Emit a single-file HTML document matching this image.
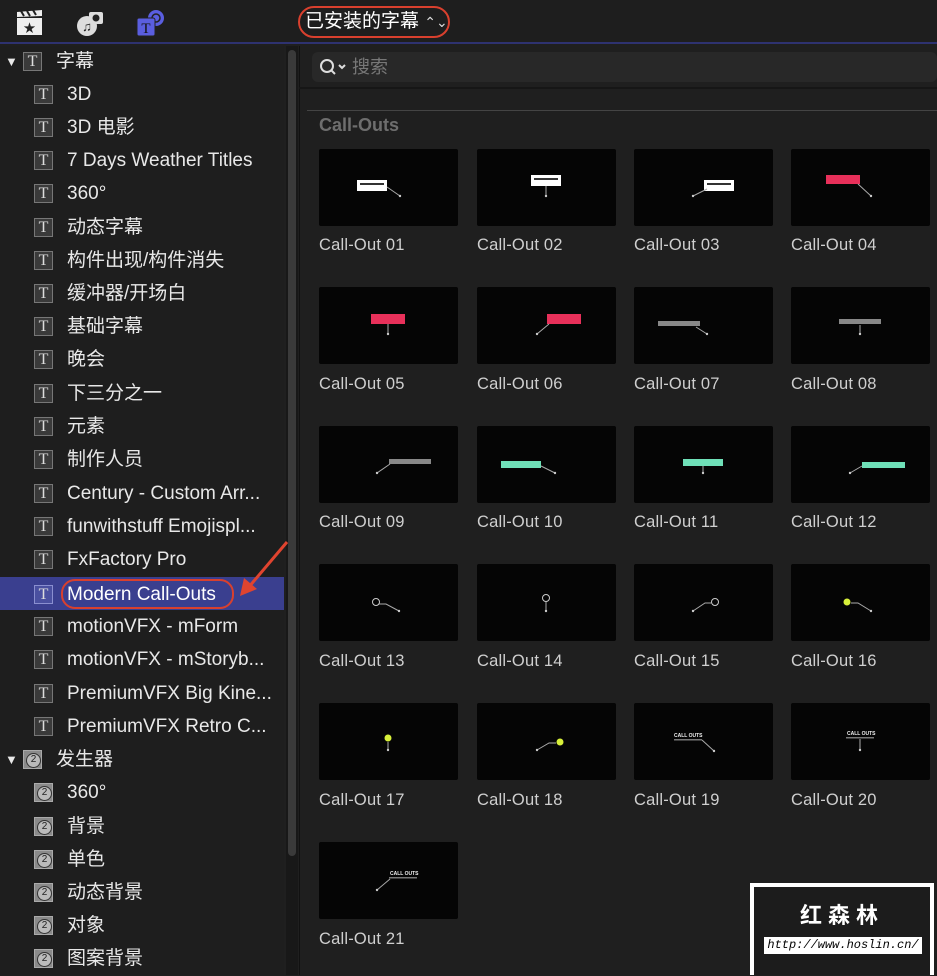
<!DOCTYPE html>
<html><head><meta charset="utf-8"><style>
*{margin:0;padding:0;box-sizing:border-box}
body{width:937px;height:975px;background:#1f1f1f;font-family:"Liberation Sans","Noto Sans CJK SC",sans-serif;color:#e6e6e6;position:relative;overflow:hidden}
.top{position:absolute;left:0;top:0;width:937px;height:44px;background:#1e1e1e;border-bottom:2px solid #2e3270}
.sel{position:absolute;left:298px;top:6px;width:152px;height:32px;border:2.5px solid #d9402e;border-radius:16px;font-size:19px;color:#fff;line-height:27px;padding-left:5px}
.side{position:absolute;left:0;top:46px;width:284px;height:929px;background:#1e1e1e}
.row{position:absolute;left:0;width:284px;height:33px;font-size:19px;line-height:35px;color:#e8e8e8;white-space:nowrap}
.ic{position:absolute;top:8px;width:19px;height:19px;background:#3a3a3a;border:1px solid #777;color:#ddd;font-family:"Liberation Serif",serif;font-size:16px;line-height:17px;text-align:center}
.ic2{position:absolute;top:8px;width:19px;height:19px;background:#8a8a8a;border:1px solid #aaa}
.ic2:after{content:"2";position:absolute;left:2px;top:2px;width:13px;height:13px;border-radius:50%;border:1px solid #333;background:#bbb;color:#222;font-size:10px;line-height:12px;text-align:center}
.track{position:absolute;left:286px;top:46px;width:12px;height:929px;background:#181818}
.thumbbar{position:absolute;left:288px;top:50px;width:8px;height:806px;background:#3a3a3a;border-radius:4px}
.main{position:absolute;left:299px;top:46px;width:638px;height:929px;background:#1f1f1f;border-left:1px solid #111}
.search{position:absolute;left:312px;top:52px;width:625px;height:30px;background:#282828;border-radius:6px;font-size:18px;color:#777;line-height:30px;padding-left:40px}
.hr1{position:absolute;left:299px;top:87px;width:638px;height:2px;background:#161616}
.hr2{position:absolute;left:307px;top:110px;width:630px;height:1px;background:#444}
.cat{position:absolute;left:319px;top:115px;font-size:18px;font-weight:bold;color:#6e6e6e}
.t{position:absolute;width:139px;height:77px;background:#050505;border-radius:2px}
.t svg{position:absolute;left:0;top:0}
.lab{position:absolute;font-size:16.5px;color:#cfcfcf;letter-spacing:.2px}
</style></head><body>
<div class="top">
<svg style="position:absolute;left:16px;top:10px" width="28" height="26" viewBox="0 0 28 26"><rect x="1" y="8" width="25" height="17" fill="#eee"/><path d="M1 2 L26 0 L26 6 L1 7Z" fill="#eee"/><path d="M5 1l3 5M11 1l3 5M17 0l3 5" stroke="#222" stroke-width="2"/><text x="13.5" y="22" font-size="12" text-anchor="middle" fill="#222">★</text></svg>
<svg style="position:absolute;left:76px;top:9px" width="28" height="28" viewBox="0 0 28 28"><circle cx="11" cy="17" r="10" fill="#ddd"/><rect x="13" y="3" width="14" height="12" rx="2" fill="#ddd"/><circle cx="20" cy="9" r="3.5" fill="#222"/><text x="11" y="22" font-size="13" text-anchor="middle" fill="#222">♫</text></svg>
<svg style="position:absolute;left:136px;top:9px" width="30" height="28" viewBox="0 0 30 28"><circle cx="20" cy="9" r="8" fill="#5a5ee0"/><circle cx="20" cy="9" r="4" fill="none" stroke="#222" stroke-width="1.5"/><rect x="1" y="9" width="18" height="18" rx="2" fill="#5a5ee0" stroke="#222"/><text x="10" y="24" font-size="15" font-family="Liberation Serif" text-anchor="middle" fill="#111">T</text></svg>
<div class="sel">已安装的字幕 <span style="font-size:14px;color:#ddd">⌃⌄</span></div>
</div>
<div class="side">
<div class="row" style="top:-2px"><span style="position:absolute;left:5px;font-size:13px">▼</span><div class="ic" style="left:23px">T</div><span style="position:absolute;left:56px">字幕</span></div>
<div class="row" style="top:31px"><div class="ic" style="left:34px">T</div><span style="position:absolute;left:67px">3D</span></div>
<div class="row" style="top:64px"><div class="ic" style="left:34px">T</div><span style="position:absolute;left:67px">3D 电影</span></div>
<div class="row" style="top:97px"><div class="ic" style="left:34px">T</div><span style="position:absolute;left:67px">7 Days Weather Titles</span></div>
<div class="row" style="top:130px"><div class="ic" style="left:34px">T</div><span style="position:absolute;left:67px">360°</span></div>
<div class="row" style="top:164px"><div class="ic" style="left:34px">T</div><span style="position:absolute;left:67px">动态字幕</span></div>
<div class="row" style="top:197px"><div class="ic" style="left:34px">T</div><span style="position:absolute;left:67px">构件出现/构件消失</span></div>
<div class="row" style="top:230px"><div class="ic" style="left:34px">T</div><span style="position:absolute;left:67px">缓冲器/开场白</span></div>
<div class="row" style="top:263px"><div class="ic" style="left:34px">T</div><span style="position:absolute;left:67px">基础字幕</span></div>
<div class="row" style="top:296px"><div class="ic" style="left:34px">T</div><span style="position:absolute;left:67px">晚会</span></div>
<div class="row" style="top:330px"><div class="ic" style="left:34px">T</div><span style="position:absolute;left:67px">下三分之一</span></div>
<div class="row" style="top:363px"><div class="ic" style="left:34px">T</div><span style="position:absolute;left:67px">元素</span></div>
<div class="row" style="top:396px"><div class="ic" style="left:34px">T</div><span style="position:absolute;left:67px">制作人员</span></div>
<div class="row" style="top:430px"><div class="ic" style="left:34px">T</div><span style="position:absolute;left:67px">Century - Custom Arr...</span></div>
<div class="row" style="top:463px"><div class="ic" style="left:34px">T</div><span style="position:absolute;left:67px">funwithstuff Emojispl...</span></div>
<div class="row" style="top:496px"><div class="ic" style="left:34px">T</div><span style="position:absolute;left:67px">FxFactory Pro</span></div>
<div class="row" style="top:531px;background:#3a3f8f"><div class="ic" style="left:34px;background:#4a50a0;border-color:#8a8fd0">T</div><span style="position:absolute;left:67px;color:#fff">Modern Call-Outs</span><div style="position:absolute;left:61px;top:2px;width:173px;height:30px;border:2.5px solid #d9402e;border-radius:14px"></div></div>
<div class="row" style="top:563px"><div class="ic" style="left:34px">T</div><span style="position:absolute;left:67px">motionVFX - mForm</span></div>
<div class="row" style="top:596px"><div class="ic" style="left:34px">T</div><span style="position:absolute;left:67px">motionVFX - mStoryb...</span></div>
<div class="row" style="top:630px"><div class="ic" style="left:34px">T</div><span style="position:absolute;left:67px">PremiumVFX Big Kine...</span></div>
<div class="row" style="top:663px"><div class="ic" style="left:34px">T</div><span style="position:absolute;left:67px">PremiumVFX Retro C...</span></div>
<div class="row" style="top:696px"><span style="position:absolute;left:5px;font-size:13px">▼</span><div class="ic2" style="left:23px"></div><span style="position:absolute;left:56px">发生器</span></div>
<div class="row" style="top:729px"><div class="ic2" style="left:34px"></div><span style="position:absolute;left:67px">360°</span></div>
<div class="row" style="top:763px"><div class="ic2" style="left:34px"></div><span style="position:absolute;left:67px">背景</span></div>
<div class="row" style="top:796px"><div class="ic2" style="left:34px"></div><span style="position:absolute;left:67px">单色</span></div>
<div class="row" style="top:829px"><div class="ic2" style="left:34px"></div><span style="position:absolute;left:67px">动态背景</span></div>
<div class="row" style="top:862px"><div class="ic2" style="left:34px"></div><span style="position:absolute;left:67px">对象</span></div>
<div class="row" style="top:895px"><div class="ic2" style="left:34px"></div><span style="position:absolute;left:67px">图案背景</span></div>
</div>
<div class="track"></div><div class="thumbbar"></div>
<svg style="position:absolute;left:230px;top:538px" width="62" height="62"><path d="M57 4 L18 50" stroke="#e0442f" stroke-width="3"/><path d="M10 58 L14 40 L27 51Z" fill="#e0442f"/></svg>
<div class="main"></div>
<div class="search"><svg style="position:absolute;left:7px;top:6px" width="28" height="18"><circle cx="8" cy="8" r="6" fill="none" stroke="#ddd" stroke-width="2"/><path d="M12 12l4 4M20 7l3 3 3-3" stroke="#ddd" stroke-width="2" fill="none"/></svg>搜索</div>
<div class="hr1"></div><div class="hr2"></div>
<div class="cat">Call-Outs</div>

<div class="t" style="left:319px;top:149px"><svg width="139" height="77"><rect x="38" y="31" width="30" height="11" fill="#fff"/><rect x="41" y="34" width="24" height="2" fill="#333"/><path d="M68 38L81 47" stroke="#aaa"/><circle cx="81" cy="47" r="1.2" fill="#ccc"/></svg></div>
<div class="t" style="left:477px;top:149px"><svg width="139" height="77"><rect x="54" y="26" width="30" height="11" fill="#fff"/><rect x="57" y="29" width="24" height="2" fill="#333"/><path d="M69 37V47" stroke="#aaa"/><circle cx="69" cy="47" r="1.2" fill="#ccc"/></svg></div>
<div class="t" style="left:634px;top:149px"><svg width="139" height="77"><rect x="70" y="31" width="30" height="11" fill="#fff"/><rect x="73" y="34" width="24" height="2" fill="#333"/><path d="M73 40L59 47" stroke="#aaa"/><circle cx="59" cy="47" r="1.2" fill="#ccc"/></svg></div>
<div class="t" style="left:791px;top:149px"><svg width="139" height="77"><rect x="35" y="26" width="34" height="9" fill="#e8305a"/><path d="M67 35L80 47" stroke="#aaa"/><circle cx="80" cy="47" r="1.2" fill="#ccc"/></svg></div>
<div class="lab" style="left:319px;top:236px">Call-Out 01</div><div class="lab" style="left:477px;top:236px">Call-Out 02</div><div class="lab" style="left:634px;top:236px">Call-Out 03</div><div class="lab" style="left:791px;top:236px">Call-Out 04</div>
<div class="t" style="left:319px;top:287px"><svg width="139" height="77"><rect x="52" y="27" width="34" height="10" fill="#e8305a"/><path d="M69 37V47" stroke="#aaa"/><circle cx="69" cy="47" r="1.2" fill="#ccc"/></svg></div>
<div class="t" style="left:477px;top:287px"><svg width="139" height="77"><rect x="70" y="27" width="34" height="10" fill="#e8305a"/><path d="M72 37L60 47" stroke="#aaa"/><circle cx="60" cy="47" r="1.2" fill="#ccc"/></svg></div>
<div class="t" style="left:634px;top:287px"><svg width="139" height="77"><rect x="24" y="34" width="42" height="5" fill="#888"/><path d="M62 40L73 47" stroke="#aaa"/><circle cx="73" cy="47" r="1.2" fill="#ccc"/></svg></div>
<div class="t" style="left:791px;top:287px"><svg width="139" height="77"><rect x="48" y="32" width="42" height="5" fill="#888"/><path d="M69 38V47" stroke="#aaa"/><circle cx="69" cy="47" r="1.2" fill="#ccc"/></svg></div>
<div class="lab" style="left:319px;top:375px">Call-Out 05</div><div class="lab" style="left:477px;top:375px">Call-Out 06</div><div class="lab" style="left:634px;top:375px">Call-Out 07</div><div class="lab" style="left:791px;top:375px">Call-Out 08</div>
<div class="t" style="left:319px;top:426px"><svg width="139" height="77"><rect x="70" y="33" width="42" height="5" fill="#888"/><path d="M71 38L58 47" stroke="#aaa"/><circle cx="58" cy="47" r="1.2" fill="#ccc"/></svg></div>
<div class="t" style="left:477px;top:426px"><svg width="139" height="77"><rect x="24" y="35" width="40" height="7" fill="#6fe0b8"/><path d="M64 40L78 47" stroke="#aaa"/><circle cx="78" cy="47" r="1.2" fill="#ccc"/></svg></div>
<div class="t" style="left:634px;top:426px"><svg width="139" height="77"><rect x="49" y="33" width="40" height="7" fill="#6fe0b8"/><path d="M69 40V47" stroke="#aaa"/><circle cx="69" cy="47" r="1.2" fill="#ccc"/></svg></div>
<div class="t" style="left:791px;top:426px"><svg width="139" height="77"><rect x="71" y="36" width="43" height="6" fill="#6fe0b8"/><path d="M71 40L59 47" stroke="#aaa"/><circle cx="59" cy="47" r="1.2" fill="#ccc"/></svg></div>
<div class="lab" style="left:319px;top:513px">Call-Out 09</div><div class="lab" style="left:477px;top:513px">Call-Out 10</div><div class="lab" style="left:634px;top:513px">Call-Out 11</div><div class="lab" style="left:791px;top:513px">Call-Out 12</div>
<div class="t" style="left:319px;top:564px"><svg width="139" height="77"><circle cx="57" cy="38" r="3.5" fill="none" stroke="#ccc"/><path d="M60 40L67 40L80 47" stroke="#aaa" fill="none"/><circle cx="80" cy="47" r="1.2" fill="#ccc"/></svg></div>
<div class="t" style="left:477px;top:564px"><svg width="139" height="77"><circle cx="69" cy="34" r="3.5" fill="none" stroke="#ccc"/><path d="M69 38V47" stroke="#aaa"/><circle cx="69" cy="47" r="1.2" fill="#ccc"/></svg></div>
<div class="t" style="left:634px;top:564px"><svg width="139" height="77"><circle cx="81" cy="38" r="3.5" fill="none" stroke="#ccc"/><path d="M77 39L71 39L59 47" stroke="#aaa" fill="none"/><circle cx="59" cy="47" r="1.2" fill="#ccc"/></svg></div>
<div class="t" style="left:791px;top:564px"><svg width="139" height="77"><circle cx="56" cy="38" r="3.5" fill="#d8f03a"/><path d="M60 39L67 39L80 47" stroke="#aaa" fill="none"/><circle cx="80" cy="47" r="1.2" fill="#ccc"/></svg></div>
<div class="lab" style="left:319px;top:652px">Call-Out 13</div><div class="lab" style="left:477px;top:652px">Call-Out 14</div><div class="lab" style="left:634px;top:652px">Call-Out 15</div><div class="lab" style="left:791px;top:652px">Call-Out 16</div>
<div class="t" style="left:319px;top:703px"><svg width="139" height="77"><circle cx="69" cy="35" r="3.5" fill="#d8f03a"/><path d="M69 39V47" stroke="#aaa"/><circle cx="69" cy="47" r="1.2" fill="#ccc"/></svg></div>
<div class="t" style="left:477px;top:703px"><svg width="139" height="77"><circle cx="83" cy="39" r="3.5" fill="#d8f03a"/><path d="M79 40L72 40L60 47" stroke="#aaa" fill="none"/><circle cx="60" cy="47" r="1.2" fill="#ccc"/></svg></div>
<div class="t" style="left:634px;top:703px"><svg width="139" height="77"><text x="40" y="34" font-size="5" font-weight="bold" fill="#eee" font-family="Liberation Sans">CALL OUTS</text><rect x="40" y="36" width="28" height="1.5" fill="#777"/><path d="M68 37L80 48" stroke="#aaa"/><circle cx="80" cy="48" r="1.2" fill="#ccc"/></svg></div>
<div class="t" style="left:791px;top:703px"><svg width="139" height="77"><text x="56" y="32" font-size="5" font-weight="bold" fill="#eee" font-family="Liberation Sans">CALL OUTS</text><rect x="55" y="34" width="28" height="1.5" fill="#777"/><path d="M69 36V47" stroke="#aaa"/><circle cx="69" cy="47" r="1.2" fill="#ccc"/></svg></div>
<div class="lab" style="left:319px;top:791px">Call-Out 17</div><div class="lab" style="left:477px;top:791px">Call-Out 18</div><div class="lab" style="left:634px;top:791px">Call-Out 19</div><div class="lab" style="left:791px;top:791px">Call-Out 20</div>
<div class="t" style="left:319px;top:842px"><svg width="139" height="77"><text x="71" y="33" font-size="5" font-weight="bold" fill="#eee" font-family="Liberation Sans">CALL OUTS</text><rect x="70" y="35" width="28" height="1.5" fill="#777"/><path d="M71 37L58 48" stroke="#aaa"/><circle cx="58" cy="48" r="1.2" fill="#ccc"/></svg></div>
<div class="lab" style="left:319px;top:930px">Call-Out 21</div>

<div style="position:absolute;left:750px;top:883px;width:184px;height:92px;background:#fff"></div>
<div style="position:absolute;left:754px;top:887px;width:176px;height:88px;background:#1c1c1c"></div>
<div style="position:absolute;left:754px;top:898px;width:176px;text-align:center;font-size:22px;font-weight:bold;color:#fff;letter-spacing:6px">红森林</div>
<div style="position:absolute;left:764px;top:937px;width:158px;height:17px;background:#fff;color:#000;font-family:'Liberation Mono',monospace;font-size:12px;font-style:italic;line-height:17px;text-align:center;overflow:hidden">http://www.hoslin.cn/</div>
</body></html>
